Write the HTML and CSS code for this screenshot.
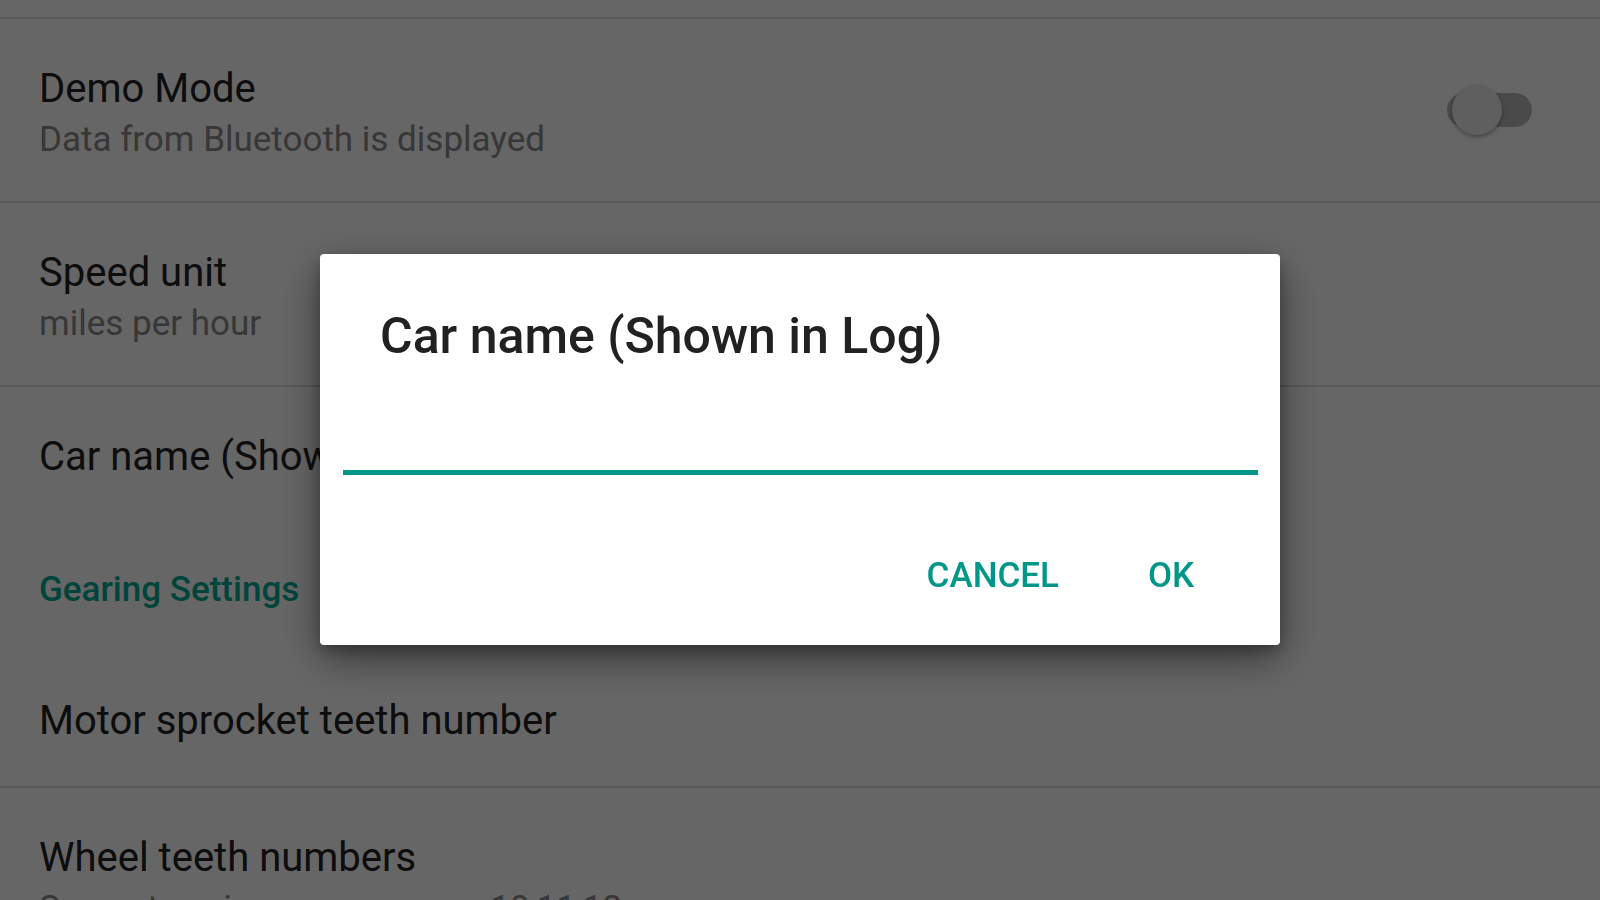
FILE: index.html
```html
<!DOCTYPE html>
<html lang="en">
<head>
<meta charset="utf-8">
<title>Settings</title>
<link rel="stylesheet" href="styles.css">
</head>
<body>
<div class="list">
  <div class="row row-partial"></div>

  <div class="row">
    <div class="text">
      <div class="title">Demo Mode</div>
      <div class="summary">Data from Bluetooth is displayed</div>
    </div>
    <div class="switch">
      <span class="track"></span>
      <span class="thumb"></span>
    </div>
  </div>

  <div class="row">
    <div class="text">
      <div class="title">Speed unit</div>
      <div class="summary">miles per hour</div>
    </div>
  </div>

  <div class="row row-single row-last">
    <div class="text">
      <div class="title">Car name (Shown in Log)</div>
    </div>
  </div>

  <div class="category">Gearing Settings</div>

  <div class="row row-single">
    <div class="text">
      <div class="title">Motor sprocket teeth number</div>
    </div>
  </div>

  <div class="row">
    <div class="text">
      <div class="title">Wheel teeth numbers</div>
      <div class="summary">Separate using commas e.g. 10,11,12</div>
    </div>
  </div>
</div>

<div class="scrim"></div>

<div class="dialog">
  <div class="dialog-title">Car name (Shown in Log)</div>
  <div class="field"></div>
  <div class="buttons">
    <span class="btn">CANCEL</span>
    <span class="btn">OK</span>
  </div>
</div>
</body>
</html>
```

FILE: styles.css
```css
html, body {
  margin: 0;
  padding: 0;
}

body {
  width: 1600px;
  height: 900px;
  overflow: hidden;
  background: #ffffff;
  font-family: Roboto, "Noto Sans", "Liberation Sans", sans-serif;
}

.list {
  display: flex;
  flex-direction: column;
}

.row {
  display: flex;
  align-items: flex-start;
  padding: 46px 68px 34px 39px;
  border-bottom: 2px solid #dcdcdc;
}

.row-partial {
  height: 17px;
  padding: 0;
}

.row-single {
  padding-bottom: 41px;
}

.row-last {
  border-bottom: none;
  padding-bottom: 43px;
}

.text {
  flex: 1;
  display: flex;
  flex-direction: column;
}

.title {
  font-size: 40px;
  line-height: 48px;
  color: #222222;
  white-space: nowrap;
}

.summary {
  font-size: 35px;
  line-height: 54px;
  color: #8a8a8a;
  white-space: nowrap;
}

.category {
  padding: 42px 39px 37px;
  font-size: 35px;
  line-height: 48px;
  font-weight: 500;
  color: #00aa95;
}

.switch {
  position: relative;
  width: 85px;
  height: 50px;
  margin-top: 20px;
  flex: none;
}

.track {
  position: absolute;
  left: 0;
  top: 8px;
  width: 85px;
  height: 34px;
  border-radius: 17px;
  background: #b9b9b9;
}

.thumb {
  position: absolute;
  left: 5px;
  top: 0;
  width: 50px;
  height: 50px;
  border-radius: 50%;
  background: #eeeeee;
  box-shadow: 0 2px 4px rgba(0, 0, 0, 0.35);
}

.scrim {
  position: fixed;
  inset: 0;
  background: rgba(0, 0, 0, 0.6);
}

.dialog {
  position: fixed;
  left: 320px;
  top: 254px;
  width: 960px;
  box-sizing: border-box;
  display: flex;
  flex-direction: column;
  background: #ffffff;
  border-radius: 4px;
  box-shadow: 0 14px 40px rgba(0, 0, 0, 0.45), 0 6px 14px rgba(0, 0, 0, 0.25);
}

.dialog-title {
  padding: 52px 59px 0 60px;
  font-size: 50px;
  line-height: 60px;
  font-weight: 500;
  color: #212121;
  white-space: nowrap;
}

.field {
  margin: 0 22.5px;
  height: 104px;
  border-bottom: 5px solid #009688;
}

.buttons {
  display: flex;
  justify-content: flex-end;
  gap: 12px;
  padding: 81px 29px 49px 0;
}

.btn {
  min-width: 160px;
  box-sizing: border-box;
  padding: 0 20px;
  text-align: center;
  font-size: 35px;
  line-height: 40px;
  font-weight: 500;
  color: #009688;
}
```
